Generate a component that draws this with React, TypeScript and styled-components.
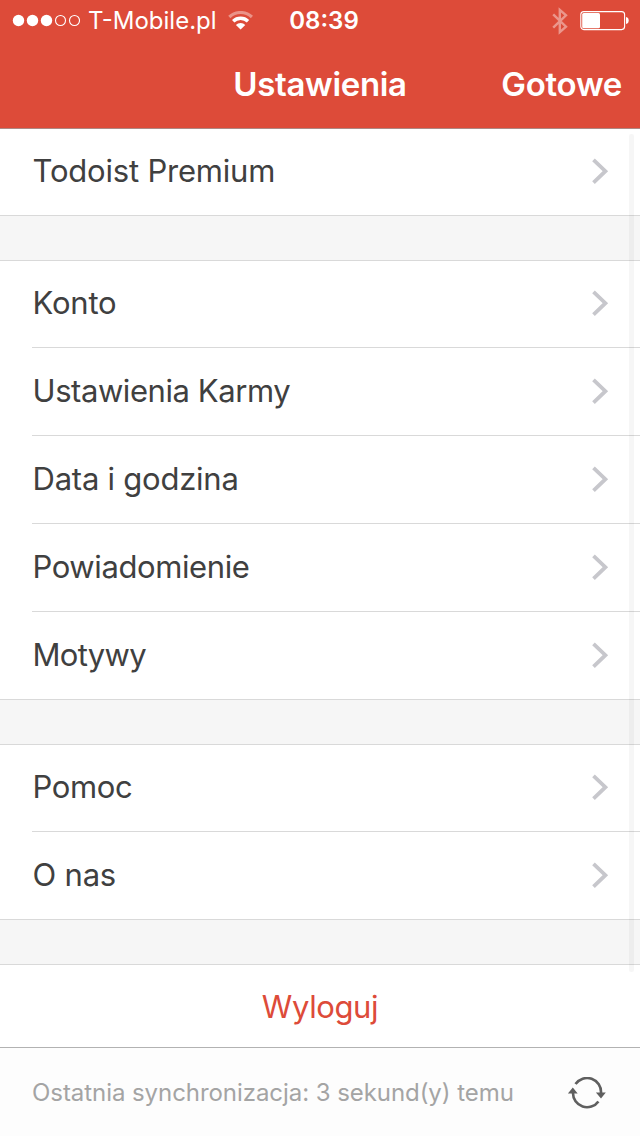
import React from 'react';
import styled, { createGlobalStyle } from 'styled-components';

const GlobalStyle = createGlobalStyle`
  * { box-sizing: border-box; }
  body { margin: 0; background: #fff; font-family: Inter, "Liberation Sans", sans-serif; }
`;

const Screen = styled.div`
  position: relative;
  width: 640px;
  height: 1136px;
  display: flex;
  flex-direction: column;
  overflow: hidden;
  background: #f6f6f6;
`;

const Header = styled.header`
  height: 129px;
  flex: none;
  background: #dd4b39;
  border-bottom: 1px solid #ad8883;
  color: #fff;
`;

const StatusBar = styled.div`
  height: 42px;
  padding: 0 11px 0 12px;
  display: grid;
  grid-template-columns: 1fr auto 1fr;
  align-items: center;
`;

const StatusGroup = styled.div<{ $end?: boolean }>`
  display: flex;
  align-items: center;
  justify-content: ${(p) => (p.$end ? 'flex-end' : 'flex-start')};
  gap: ${(p) => (p.$end ? 12 : 0)}px;
  svg { display: block; flex: none; }
`;

const Text = styled.span<{ $size: number; $spacing?: number; $weight?: number }>`
  font-size: ${(p) => p.$size}px;
  line-height: 40px;
  font-weight: ${(p) => p.$weight ?? 400};
  letter-spacing: ${(p) => p.$spacing ?? 0}px;
  white-space: nowrap;
`;

const Carrier = styled(Text)`
  margin: 0 11px 0 8px;
`;

const Clock = styled(Text)`
  padding-left: 7px;
`;

const NavBar = styled.nav`
  height: 84px;
  padding: 0 18px;
  display: grid;
  grid-template-columns: 1fr auto 1fr;
  align-items: center;
`;

const Title = styled(Text)`
  grid-column: 2;
`;

const Done = styled(Text)`
  justify-self: end;
`;

const Group = styled.section`
  flex: none;
  background: #fff;
  border-top: 1px solid #d9d9d9;
  margin-top: 44px;
  &:first-child { border-top: 0; margin-top: 0; }
`;

const Row = styled.div`
  height: 88px;
  padding-left: 32px;
  &:first-child { height: 87px; }
  &:last-child { padding-left: 0; }
`;

const RowBody = styled.div`
  height: 100%;
  padding: 0 31px 2px 0.5px;
  display: flex;
  align-items: center;
  justify-content: space-between;
  border-bottom: 1px solid #d9d9d9;
  color: #404040;
  ${Row}:last-child > & { padding-left: 32.5px; }
  svg { display: block; flex: none; }
`;

const Logout = styled(Group)`
  flex: 1;
  padding-top: 2px;
  display: flex;
  justify-content: center;
  align-items: center;
  color: #dd4b39;
`;

const Footer = styled.footer`
  height: 89px;
  flex: none;
  padding: 2px 33px 0 32px;
  display: flex;
  justify-content: space-between;
  align-items: center;
  border-top: 1px solid #b2b2b2;
  background: #fdfdfd;
  color: #a4a4a4;
`;

const List = styled.main`
  flex: 1;
  display: flex;
  flex-direction: column;
`;

const ScrollTrack = styled.div`
  position: absolute;
  left: 629px;
  top: 134px;
  width: 5px;
  height: 838px;
  border-radius: 2px;
  background: rgba(0, 0, 0, 0.035);
`;

const SignalDots = () => (
  <svg width="68" height="14" viewBox="0 0 68 14">
    {[6.5, 20.5, 34.5].map((x) => <circle key={x} cx={x} cy="6.5" r="5.7" fill="#fff" />)}
    {[48.5, 62.5].map((x) => <circle key={x} cx={x} cy="6.5" r="5" fill="none" stroke="#fff" strokeWidth="1.1" />)}
  </svg>
);

const Wifi = () => (
  <svg width="26" height="20" viewBox="0 0 26 20" fill="none">
    <path d="M1.3 6a16.500 16.500 0 0 1 22.600 0" stroke="#fff" strokeOpacity=".4" strokeWidth="3.2" />
    <path d="M5.200 10.300a10.600 10.600 0 0 1 14.800 0" stroke="#fff" strokeWidth="3.4" />
    <path d="M12.600 18.500l-4.700-4.600a6.500 6.500 0 0 1 9.400 0z" fill="#fff" />
  </svg>
);

const Bluetooth = () => (
  <svg width="16" height="28" viewBox="0 0 16 28" fill="none" stroke="#fff" strokeOpacity=".42" strokeWidth="2.4">
    <path d="M1.2 7.3l12.8 12.4-6.2 5.500V2.800l6.200 5.500L1.2 20.7" />
  </svg>
);

const Battery = () => (
  <svg width="49" height="20" viewBox="0 0 49 20">
    <rect x=".8" y=".6" width="43.8" height="18" rx="3" fill="none" stroke="#fff" strokeWidth="1.1" />
    <rect x="2.2" y="2" width="17.8" height="15.2" rx="1.5" fill="#fff" />
    <path d="M46 6c1.8.3 2.7 1.5 2.7 3.5S47.8 12.7 46 13z" fill="#fff" />
  </svg>
);

const Chevron = () => (
  <svg width="18" height="28" viewBox="0 0 18 28" fill="none" stroke="#c7c7cc" strokeWidth="3.8">
    <path d="M2.5 2.8l11.900 11.400L2.5 25.6" />
  </svg>
);

const Sync = () => (
  <svg width="40" height="32" viewBox="0 0 40 32" fill="none" stroke="#5f5f5f" strokeWidth="2.6">
    <path d="M8.5 7.1A14 14 0 0 1 34 16v1" />
    <path d="M31.4 24.4A14 14 0 0 1 6 16v-1" />
    <path d="M.9 16.6l4.900-6.200 4.900 6.200zM28.900 15.400h9.900L34 21.6z" fill="#5f5f5f" stroke="none" />
  </svg>
);

const groups: { label: string; spacing: number }[][] = [
  [{ label: 'Todoist Premium', spacing: -0.2 }],
  [
    { label: 'Konto', spacing: -0.2 },
    { label: 'Ustawienia Karmy', spacing: -0.43 },
    { label: 'Data i godzina', spacing: -0.23 },
    { label: 'Powiadomienie', spacing: -0.4 },
    { label: 'Motywy', spacing: -0.7 },
  ],
  [
    { label: 'Pomoc', spacing: -0.35 },
    { label: 'O nas', spacing: -0.2 },
  ],
];

export default function App() {
  return (
    <Screen>
      <GlobalStyle />
      <Header>
        <StatusBar>
          <StatusGroup>
            <SignalDots />
            <Carrier $size={24}>T-Mobile.pl</Carrier>
            <Wifi />
          </StatusGroup>
          <Clock $size={24} $weight={600}>08:39</Clock>
          <StatusGroup $end>
            <Bluetooth />
            <Battery />
          </StatusGroup>
        </StatusBar>
        <NavBar>
          <Title $size={33} $weight={600} $spacing={-0.35}>Ustawienia</Title>
          <Done $size={33} $weight={600} $spacing={-0.3}>Gotowe</Done>
        </NavBar>
      </Header>
      <List>
        {groups.map((rows) => (
          <Group key={rows[0].label}>
            {rows.map((row) => (
              <Row key={row.label}>
                <RowBody>
                  <Text $size={31} $spacing={row.spacing}>{row.label}</Text>
                  <Chevron />
                </RowBody>
              </Row>
            ))}
          </Group>
        ))}
        <Logout>
          <Text $size={31} $spacing={-0.4}>Wyloguj</Text>
        </Logout>
      </List>
      <Footer>
        <Text $size={24} $spacing={-0.06}>Ostatnia synchronizacja: 3 sekund(y) temu</Text>
        <Sync />
      </Footer>
      <ScrollTrack />
    </Screen>
  );
}
